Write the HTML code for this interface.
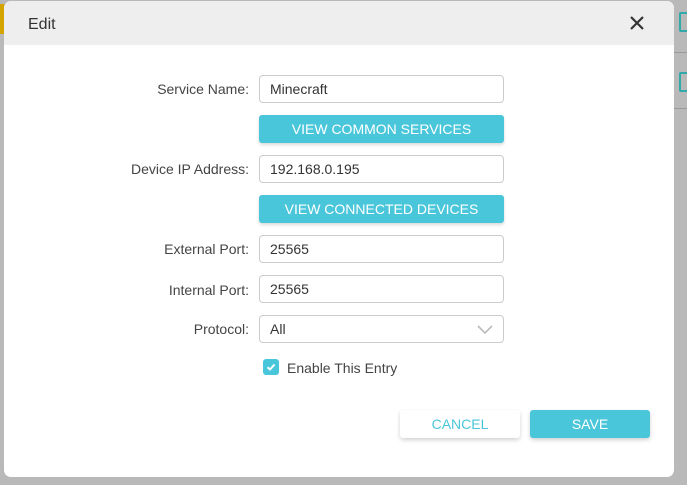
<!DOCTYPE html>
<html><head><style>
body{margin:0;width:687px;height:485px;background:#b9b9b9;position:relative;overflow:hidden;font-family:"Liberation Sans",sans-serif;}
.y{position:absolute;left:0;top:4px;width:5px;height:30px;background:#d4a500;}
.m{position:absolute;left:4px;top:1px;width:670px;height:476px;background:#fff;border-radius:7px;overflow:hidden;}
.h{height:44px;background:#eeeeee;}
.h span{position:absolute;left:24px;top:15px;font-size:16px;color:#333;}
.x{position:absolute;left:624px;top:13px;}
.l{position:absolute;right:425px;font-size:14px;color:#444;text-align:right;}
.i{position:absolute;left:255px;width:245px;height:28px;box-sizing:border-box;border:1px solid #ccc;border-radius:4px;font-size:14px;color:#333;line-height:26px;padding-left:10px;}
.b{position:absolute;left:255px;width:245px;height:28px;background:#4ac6da;border-radius:3px;color:#fff;font-size:14px;text-align:center;line-height:28px;box-shadow:0 2px 3px rgba(0,0,0,.15);}
.btn{position:absolute;top:409px;width:120px;height:28px;border-radius:3px;font-size:14px;text-align:center;line-height:28px;box-shadow:0 2px 4px rgba(0,0,0,.18);}
.r{position:absolute;left:679px;width:8px;height:16px;border:2px solid #3aa;border-radius:2px;border-right:none}
</style></head><body>
<div class="y"></div>
<div class="r" style="top:12px"></div><div class="r" style="top:72px"></div>
<div style="position:absolute;left:674px;top:52px;width:13px;height:1px;background:#999"></div>
<div style="position:absolute;left:674px;top:108px;width:13px;height:1px;background:#999"></div>
<div class="m">
<div class="h"><span>Edit</span>
<svg class="x" width="18" height="18" viewBox="0 0 18 18"><path d="M3 3L15 15M15 3L3 15" stroke="#333" stroke-width="2.2"/></svg></div>
<div class="l" style="top:80px">Service Name:</div>
<div class="i" style="top:74px">Minecraft</div>
<div class="b" style="top:114px">VIEW COMMON SERVICES</div>
<div class="l" style="top:160px">Device IP Address:</div>
<div class="i" style="top:154px">192.168.0.195</div>
<div class="b" style="top:194px">VIEW CONNECTED DEVICES</div>
<div class="l" style="top:240px">External Port:</div>
<div class="i" style="top:234px">25565</div>
<div class="l" style="top:281px">Internal Port:</div>
<div class="i" style="top:274px">25565</div>
<div class="l" style="top:320px">Protocol:</div>
<div class="i" style="top:314px">All
<svg style="position:absolute;right:10px;top:9px" width="16" height="10" viewBox="0 0 16 10"><path d="M1 1L8 8L15 1" stroke="#bbb" stroke-width="1.6" fill="none"/></svg></div>
<div style="position:absolute;left:259px;top:358px;width:16px;height:16px;background:#4ac6da;border-radius:3px">
<svg width="16" height="16" viewBox="0 0 16 16"><path d="M4.5 8.3L7 10.5L11.5 5.5" stroke="#fff" stroke-width="2" fill="none"/></svg></div>
<div style="position:absolute;left:283px;top:359px;font-size:14px;color:#444">Enable This Entry</div>
<div class="btn" style="left:396px;background:#fff;color:#4ac6da">CANCEL</div>
<div class="btn" style="left:526px;background:#4ac6da;color:#fff">SAVE</div>
</div>
</body></html>
